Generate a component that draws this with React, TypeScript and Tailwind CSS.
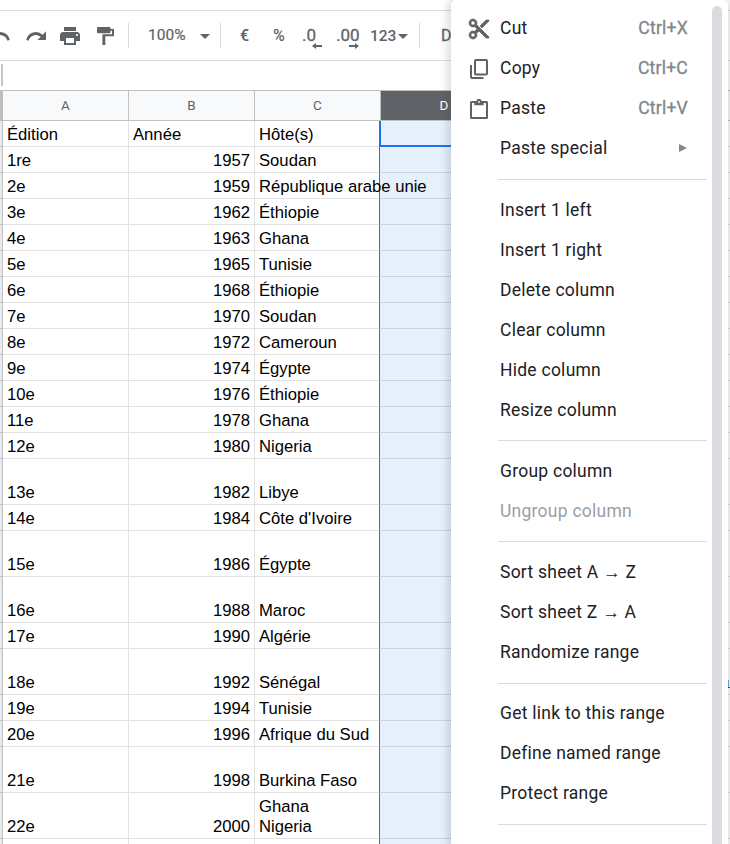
import type { ReactNode } from "react";

type Row = { edition: string; year: string; host: string; tall?: boolean };

const rows: Row[] = [
  { edition: "Édition", year: "Année", host: "Hôte(s)" },
  { edition: "1re", year: "1957", host: "Soudan" },
  { edition: "2e", year: "1959", host: "République arabe unie" },
  { edition: "3e", year: "1962", host: "Éthiopie" },
  { edition: "4e", year: "1963", host: "Ghana" },
  { edition: "5e", year: "1965", host: "Tunisie" },
  { edition: "6e", year: "1968", host: "Éthiopie" },
  { edition: "7e", year: "1970", host: "Soudan" },
  { edition: "8e", year: "1972", host: "Cameroun" },
  { edition: "9e", year: "1974", host: "Égypte" },
  { edition: "10e", year: "1976", host: "Éthiopie" },
  { edition: "11e", year: "1978", host: "Ghana" },
  { edition: "12e", year: "1980", host: "Nigeria" },
  { edition: "13e", year: "1982", host: "Libye", tall: true },
  { edition: "14e", year: "1984", host: "Côte d'Ivoire" },
  { edition: "15e", year: "1986", host: "Égypte", tall: true },
  { edition: "16e", year: "1988", host: "Maroc", tall: true },
  { edition: "17e", year: "1990", host: "Algérie" },
  { edition: "18e", year: "1992", host: "Sénégal", tall: true },
  { edition: "19e", year: "1994", host: "Tunisie" },
  { edition: "20e", year: "1996", host: "Afrique du Sud" },
  { edition: "21e", year: "1998", host: "Burkina Faso", tall: true },
  { edition: "22e", year: "2000", host: "Ghana\nNigeria", tall: true },
  { edition: "", year: "", host: "" },
];

function CutIcon() {
  return (
    <svg viewBox="2 2 20 20" className="size-[20px] overflow-visible" fill="currentColor" stroke="currentColor" strokeWidth="0.7">
      <path d="M9.64 7.64c.23-.5.36-1.05.36-1.64 0-2.21-1.79-4-4-4S2 3.79 2 6s1.79 4 4 4c.59 0 1.14-.13 1.64-.36L10 12l-2.36 2.36C7.14 14.13 6.59 14 6 14c-2.21 0-4 1.79-4 4s1.79 4 4 4 4-1.79 4-4c0-.59-.13-1.14-.36-1.64L12 14l7 7h3v-1L9.64 7.64zM6 8c-1.1 0-2-.89-2-2s.9-2 2-2 2 .89 2 2-.9 2-2 2zm0 12c-1.1 0-2-.89-2-2s.9-2 2-2 2 .89 2 2-.9 2-2 2zM19 3l-6 6 2 2 7-7V3z" />
    </svg>
  );
}

function CopyIcon() {
  return (
    <svg viewBox="0 0 20 20" className="size-[20px]" fill="none" stroke="currentColor" strokeWidth="2">
      <rect x="6" y="1" width="12" height="14.500" rx="1" />
      <path d="M2 6v12q0 1 1 1h11.500" />
    </svg>
  );
}

function PasteIcon() {
  return (
    <svg viewBox="0 0 20 20" className="size-[20px]" fill="none" stroke="currentColor" strokeWidth="2">
      <rect x="2" y="3" width="16" height="16" rx="0.500" />
      <path d="M5.300 2.500h2.100a2.600 2.600 0 0 1 5.200 0h2.100V6.300H5.300z" fill="currentColor" stroke="none" />
      <circle cx="10" cy="2.900" r="0.900" fill="#fff" stroke="none" />
    </svg>
  );
}

function RedoIcon({ className }: { className: string }) {
  return (
    <svg viewBox="0 0 20 10" className={`h-[10px] w-[20px] shrink-0 overflow-visible ${className}`} fill="currentColor">
      <path d="M20 .3V9h-8.700l3.400-3.100A7.400 7.400 0 0 0 2.600 9.700L.2 8.800A9.900 9.900 0 0 1 16.700 3.800z" />
    </svg>
  );
}

function PrintIcon({ className }: { className: string }) {
  return (
    <svg viewBox="2 3 20 18" className={`h-[18px] w-[20px] shrink-0 ${className}`} fill="currentColor">
      <path d="M19 8H5c-1.660 0-3 1.340-3 3v6h4v4h12v-4h4v-6c0-1.660-1.340-3-3-3zm-3 11H8v-5h8v5zm3-7c-.55 0-1-.45-1-1s.45-1 1-1 1 .45 1 1-.45 1-1 1zM18 3H6v4h12z" />
    </svg>
  );
}

function RollerIcon({ className }: { className: string }) {
  return (
    <svg viewBox="0 0 17 18" className={`h-[18px] w-[17px] shrink-0 ${className}`} fill="currentColor">
      <rect width="13.500" height="6.300" rx="1" />
      <path d="M13 2h4v7.300H8.300V18H5.400V7.200h9.600V3.800h-2z" />
    </svg>
  );
}

function Arrow({ left }: { left?: boolean }) {
  return (
    <svg
      viewBox="0 0 10 6"
      className={`absolute top-[18px] h-[6px] w-[10px] ${left ? "left-[10px]" : "left-[13px]"}`}
      fill="currentColor"
    >
      <path d={left ? "M0 3 4 0v2h6v2H4v2z" : "M10 3 6 0v2H0v2h6v2z"} />
    </svg>
  );
}

function Caret() {
  return <span className="mt-[2px] border-x-[5px] border-t-[5px] border-x-transparent border-t-[#5f6368]" />;
}

function Separator({ className }: { className: string }) {
  return <div className={`h-[25px] w-px shrink-0 bg-[#dadce0] ${className}`} />;
}

function Toolbar() {
  return (
    <div className="flex h-[49px] items-center text-[16px] leading-[20px] font-medium whitespace-nowrap text-[#5f6368]">
      <RedoIcon className="-ml-[10px] -scale-x-100" />
      <RedoIcon className="ml-[16px]" />
      <PrintIcon className="ml-[14px]" />
      <RollerIcon className="mt-px ml-[17px]" />
      <Separator className="ml-[14px]" />
      <span className="-mt-[2px] ml-[19px] w-[52px] text-[15.500px] font-normal [-webkit-text-stroke:0.200px]">100%</span>
      <Caret />
      <Separator className="ml-[10px]" />
      <span className="ml-[19px] w-[33px]">€</span>
      <span className="w-[29px]">%</span>
      <span className="relative -mt-[2px] w-[34px] text-[17px] font-normal [-webkit-text-stroke:0.300px]">
        .0
        <Arrow left />
      </span>
      <span className="relative -mt-[2px] w-[34px] text-[17px] font-normal [-webkit-text-stroke:0.300px]">
        .00
        <Arrow />
      </span>
      <span className="w-[28px] text-[15.500px]">123</span>
      <Caret />
      <Separator className="ml-[11px]" />
      <span className="ml-[21px] font-normal [-webkit-text-stroke:0.300px]">Default</span>
    </div>
  );
}

function Sheet() {
  return (
    <div className="w-[730px]">
      <div className="flex h-[31px] border-y border-[#c0c0c0] bg-[#f8f9fa] text-center text-[13.500px] leading-[29px] text-[#5f6368]">
        <div className="w-[3px] bg-[#bdbdbd]" />
        <div className="w-[126px] border-r border-[#c0c0c0]">A</div>
        <div className="w-[126px] border-r border-[#c0c0c0]">B</div>
        <div className="w-[126px] border-r border-[#c0c0c0]">C</div>
        <div className="w-[126px] bg-[#5f6368] text-white">D</div>
        <div className="flex-1" />
      </div>
      <div className="font-['Liberation_Sans',Arial,sans-serif] text-[16.670px] leading-[20px] text-black">
        {rows.map((r, i) => (
          <div key={i} className={`flex ${r.tall ? "h-[46px]" : "h-[26px]"}`}>
            <div className="w-[3px] shrink-0 border-r border-b border-[#c0c0c0] bg-[#e8eaed]" />
            <div className="flex w-[126px] shrink-0 items-end border-r border-b border-[#e2e2e3] pb-px pl-[4px]">{r.edition}</div>
            <div className={`flex w-[126px] shrink-0 items-end border-r border-b border-[#e2e2e3] px-[4px] pb-px ${i ? "justify-end" : ""}`}>{r.year}</div>
            <div className="relative z-10 flex w-[124px] shrink-0 items-end border-b border-[#e2e2e3] pb-px pl-[4px] whitespace-pre">{r.host}</div>
            <div className={`w-[127px] shrink-0 bg-[#e6effc] ${i ? "border-b border-l border-b-[#cad3df] border-l-[#1a73e8]" : "border-b-2 border-l-2 border-[#1a73e8]"}`} />
            <div className="flex-1 border-b border-[#e2e2e3]" />
          </div>
        ))}
      </div>
    </div>
  );
}

function Item({ label, shortcut, icon, disabled }: { label: string; shortcut?: ReactNode; icon?: ReactNode; disabled?: boolean }) {
  return (
    <div className={`flex h-[40px] items-center pr-[40px] pl-[18px] text-[17.500px] tracking-[0.25px] ${disabled ? "text-[#9aa0a6]" : "text-[#202124]"}`}>
      <span className="mt-[2px] w-[31px] shrink-0 text-[#5f6368]">{icon}</span>
      <span className="flex-1 whitespace-nowrap">{label}</span>
      <span className="text-[#80868b] [-webkit-text-stroke:0.300px]">{shortcut}</span>
    </div>
  );
}

function Divider({ className }: { className: string }) {
  return (
    <div className={`pr-[21px] pl-[47px] ${className}`}>
      <div className="h-px bg-[#dadce0]" />
    </div>
  );
}

function ContextMenu() {
  return (
    <div className="absolute top-0 left-[451px] z-20 h-[844px] w-[277px] rounded-t-[5px] bg-white shadow-[0_2px_8px_3px_rgba(60,64,67,0.2)]">
      <div className="w-full pt-[8px]">
        <Item label="Cut" shortcut="Ctrl+X" icon={<CutIcon />} />
        <Item label="Copy" shortcut="Ctrl+C" icon={<CopyIcon />} />
        <Item label="Paste" shortcut="Ctrl+V" icon={<PasteIcon />} />
        <Item
          label="Paste special"
          shortcut={<span className="mr-px block border-y-[4px] border-l-[8px] border-y-transparent border-l-[#80868b]" />}
        />
        <Divider className="pt-[11px] pb-[10px]" />
        <Item label="Insert 1 left" />
        <Item label="Insert 1 right" />
        <Item label="Delete column" />
        <Item label="Clear column" />
        <Item label="Hide column" />
        <Item label="Resize column" />
        <Divider className="py-[10px]" />
        <Item label="Group column" />
        <Item label="Ungroup column" disabled />
        <Divider className="py-[10px]" />
        <Item label="Sort sheet A → Z" />
        <Item label="Sort sheet Z → A" />
        <Item label="Randomize range" />
        <Divider className="pt-[11px] pb-[9px]" />
        <Item label="Get link to this range" />
        <Item label="Define named range" />
        <Item label="Protect range" />
        <Divider className="pt-[11px]" />
      </div>
      <div className="absolute top-[6px] right-[6px] bottom-0 w-[10px] rounded-t-full bg-[#dadce0]" />
    </div>
  );
}

export default function App() {
  return (
    <div className="relative h-[844px] w-[730px] overflow-hidden bg-white font-[Roboto,sans-serif]">
      <div className="h-[11px] border-b border-[#dadce0]" />
      <Toolbar />
      <div className="flex h-[30px] border-t border-[#dadce0] pt-[3px]">
        <div className="ml-px h-[22px] w-[2px] bg-[#c6c6c6]" />
      </div>
      <Sheet />
      <ContextMenu />
      <div className="absolute top-[680px] left-[728px] z-30 h-[8px] w-[2px] border-b border-[#174ea6]">
        <div className="h-[7px] w-px bg-[#4aa8e8]" />
      </div>
    </div>
  );
}
